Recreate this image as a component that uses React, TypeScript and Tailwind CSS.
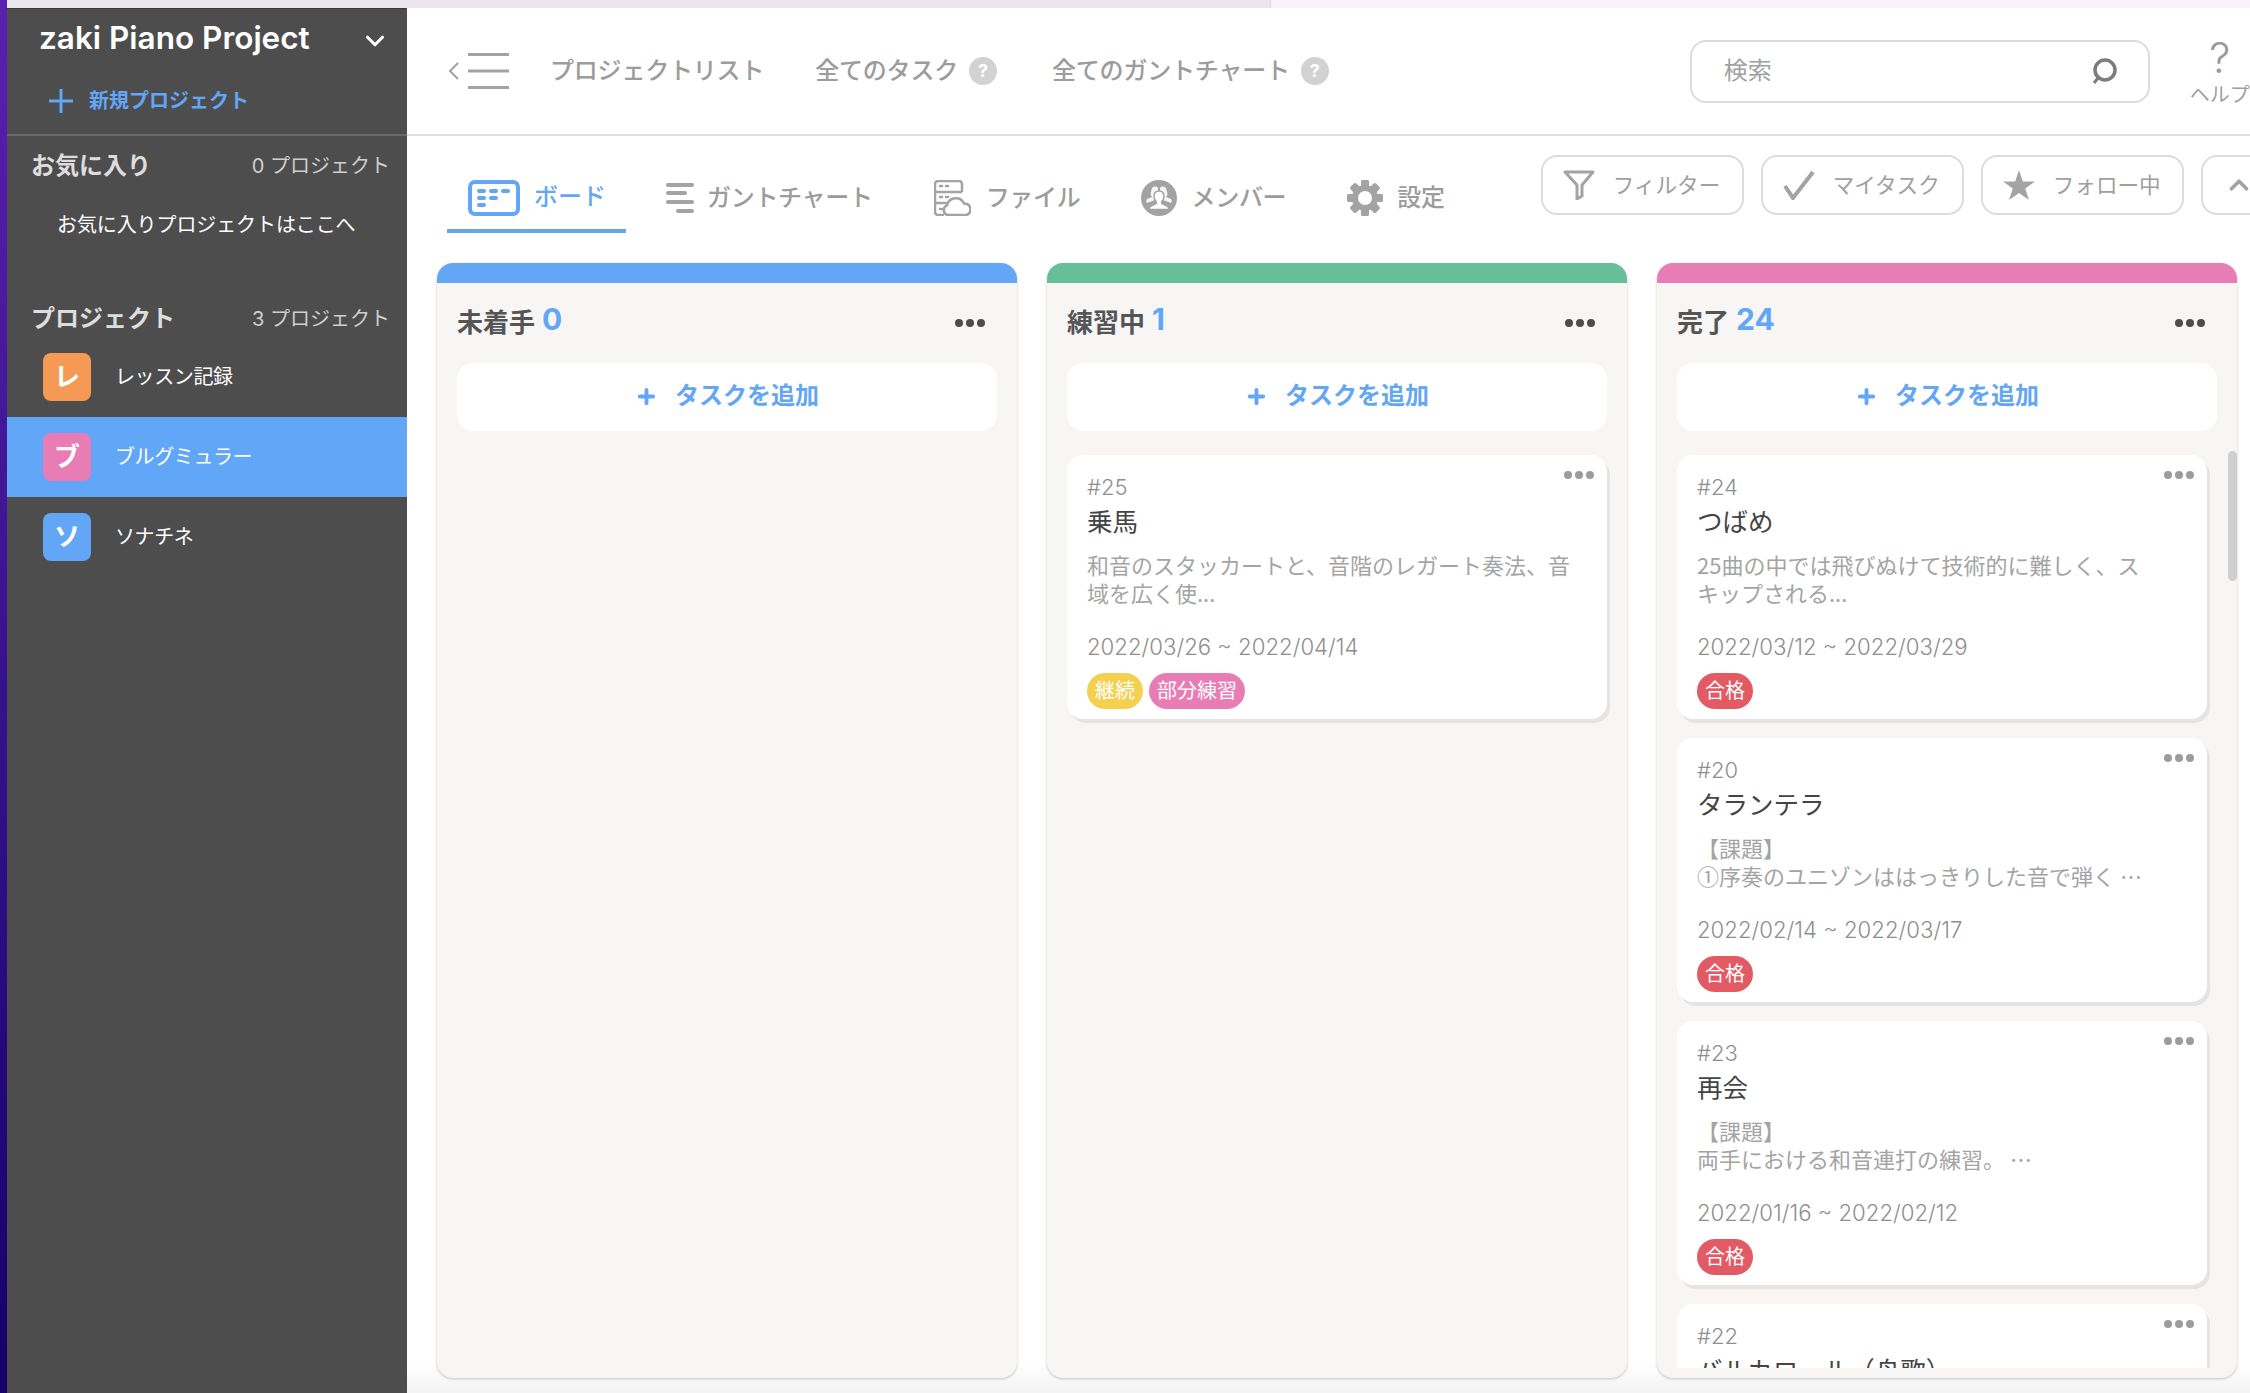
import { ChevronDown, ChevronUp, Plus } from "lucide-react";

const navLinks = [
  { label: "プロジェクトリスト", help: false, className: "ml-[41px]" },
  { label: "全てのタスク", help: true, className: "ml-[51px]" },
  { label: "全てのガントチャート", help: true, className: "ml-[55px]" },
];

function HelpDot() {
  return (
    <span className="ml-[11px] flex h-[28px] w-[28px] items-center justify-center rounded-full bg-[#d2d2d2] text-[18px] font-bold leading-none text-white">
      ?
    </span>
  );
}

function BoardIcon() {
  return (
    <svg viewBox="0 0 52 36" className="h-[36px] w-[52px]">
      <rect x="2" y="2" width="48" height="32" rx="5" fill="none" stroke="#62a6f5" strokeWidth="4" />
      <g fill="#62a6f5">
        <rect x="9" y="9" width="9" height="4" rx="2" />
        <rect x="21" y="9" width="9" height="4" rx="2" />
        <rect x="33" y="9" width="9" height="4" rx="2" />
        <rect x="9" y="16" width="9" height="4" rx="2" />
        <rect x="21" y="16" width="9" height="4" rx="2" />
        <rect x="9" y="23" width="9" height="4" rx="2" />
      </g>
    </svg>
  );
}

function GanttIcon() {
  return (
    <svg viewBox="0 0 28 30" className="h-[30px] w-[28px]" fill="#a3a3a3">
      <rect x="0" y="0" width="28" height="4" rx="2" />
      <rect x="0" y="8" width="21" height="4" rx="2" />
      <rect x="0" y="17" width="28" height="4" rx="2" />
      <rect x="10" y="26" width="18" height="4" rx="2" />
    </svg>
  );
}

function FileIcon() {
  return (
    <svg viewBox="0 0 37 36" className="h-[36px] w-[37px]" fill="none" stroke="#a3a3a3" strokeWidth="2.5">
      <path d="M10 35H4a3 3 0 0 1-3-3V4a3 3 0 0 1 3-3h21a3 3 0 0 1 3 3v8" />
      <path d="M1 12h27M1 23h13" />
      <path d="M14 35a5 5 0 0 1-1-9.6 9 9 0 0 1 17-2 6 6 0 0 1 3 11.4 5 5 0 0 1-2 .2z" />
      <path d="M6 6h2M12 6h2M6 17h2M12 17h2M6 29h2" strokeLinecap="round" />
    </svg>
  );
}

function MemberIcon() {
  return (
    <svg viewBox="0 0 36 36" className="h-[36px] w-[36px]">
      <circle cx="18" cy="18" r="18" fill="#a3a3a3" />
      <g fill="#fff">
        <path d="M11 8c2-2 5-2 6 0v6c0 2-1 3-2 4l-1 2-8 3c-1-1-1-3 0-4l5-2c-1-1-2-3-1-5z" opacity="0.9" />
        <path d="M25 8c-2-2-5-2-6 0v6c0 2 1 3 2 4l1 2 8 3c1-1 1-3 0-4l-5-2c1-1 2-3 1-5z" opacity="0.9" />
      </g>
      <path
        d="M18 11c3 0 5 2 5 5.500 0 2.400-1 4-2.200 5.300v1.700l6.200 3.200c.6 1 .8 2 .8 2.800H8.200c0-.8.2-1.800.8-2.800l6.200-3.200v-1.700C14 20.500 13 18.900 13 16.500c0-3.500 2-5.500 5-5.500z"
        fill="#fff"
        stroke="#a3a3a3"
        strokeWidth="1.500"
      />
    </svg>
  );
}

function GearIcon() {
  return (
    <svg viewBox="0 0 36 36" className="h-[36px] w-[36px]">
      <g fill="#a3a3a3">
        {[0, 45, 90, 135, 180, 225, 270, 315].map((a) => (
          <rect key={a} x="14" y="0" width="8" height="36" rx="2" transform={`rotate(${a} 18 18)`} />
        ))}
        <circle cx="18" cy="18" r="13" />
      </g>
      <circle cx="18" cy="18" r="7" fill="#fff" />
    </svg>
  );
}

const tabs = [
  { label: "ガントチャート", icon: <GanttIcon />, className: "ml-[40px]", gap: "gap-[13px]" },
  { label: "ファイル", icon: <FileIcon />, className: "ml-[61px]", gap: "gap-[15px]" },
  { label: "メンバー", icon: <MemberIcon />, className: "ml-[61px]", gap: "gap-[14px]" },
  { label: "設定", icon: <GearIcon />, className: "ml-[61px]", gap: "gap-[14px]" },
];

function FilterButton({ label, icon }: { label: string; icon: React.ReactNode }) {
  return (
    <div className="flex h-[60px] w-[203px] shrink-0 items-center rounded-[16px] border-2 border-[#dcdcdc] pl-[20px]">
      <span className="flex w-[33px] justify-center">{icon}</span>
      <span className="ml-[17px] text-[21.600px] text-[#a0a0a0]">{label}</span>
    </div>
  );
}

function Dots({ dark }: { dark?: boolean }) {
  const dot = dark ? "bg-[#4d4d4d]" : "bg-[#9c9c9c]";
  return (
    <div className="flex gap-[3px]">
      <span className={`h-[8px] w-[8px] rounded-full ${dot}`} />
      <span className={`h-[8px] w-[8px] rounded-full ${dot}`} />
      <span className={`h-[8px] w-[8px] rounded-full ${dot}`} />
    </div>
  );
}

type Task = {
  id: number;
  title: string;
  lines: string[];
  date: string;
  tags: { label: string; color: string; width: string }[];
};

const pass = { label: "合格", color: "bg-[#e25a64]", width: "w-[56px]" };

const doingTasks: Task[] = [
  {
    id: 25,
    title: "乗馬",
    lines: ["和音のスタッカートと、音階のレガート奏法、音", "域を広く使..."],
    date: "2022/03/26 ~ 2022/04/14",
    tags: [
      { label: "継続", color: "bg-[#f5d04f]", width: "w-[56px]" },
      { label: "部分練習", color: "bg-[#e87cb4]", width: "w-[96px]" },
    ],
  },
];

const doneTasks: Task[] = [
  {
    id: 24,
    title: "つばめ",
    lines: ["25曲の中では飛びぬけて技術的に難しく、ス", "キップされる..."],
    date: "2022/03/12 ~ 2022/03/29",
    tags: [pass],
  },
  {
    id: 20,
    title: "タランテラ",
    lines: ["【課題】", "①序奏のユニゾンははっきりした音で弾く …"],
    date: "2022/02/14 ~ 2022/03/17",
    tags: [pass],
  },
  {
    id: 23,
    title: "再会",
    lines: ["【課題】", "両手における和音連打の練習。 …"],
    date: "2022/01/16 ~ 2022/02/12",
    tags: [pass],
  },
  {
    id: 22,
    title: "バルカロール（舟歌）",
    lines: [],
    date: "",
    tags: [],
  },
];

function TaskCard({ task }: { task: Task }) {
  return (
    <div className="relative h-[264px] shrink-0 rounded-[16px] bg-white pl-[20px] pr-[20px] pt-[20px] shadow-[3px_4px_0_#e4e4e4]">
      <div className="absolute right-[13px] top-[16px]">
        <Dots />
      </div>
      <div className="text-[22px] font-light leading-[24px] text-[#8f8f8f]">#{task.id}</div>
      <div className="mt-[8px] text-[25.500px] leading-[30px] text-[#444]">{task.title}</div>
      <div className="mt-[13px] h-[56px] font-['Noto_Sans_CJK_JP'] text-[22px] leading-[28px] text-[#a4a4a4]">
        {task.lines.map((line) => (
          <div key={line} className="whitespace-nowrap">
            {line}
          </div>
        ))}
      </div>
      <div className="mt-[28px] text-[22.200px] font-light leading-[26px] text-[#8f8f8f]">{task.date}</div>
      <div className="mt-[13px] flex gap-[6px]">
        {task.tags.map((tag) => (
          <span
            key={tag.label}
            className={`flex h-[36px] items-center justify-center rounded-full text-[20px] text-white ${tag.color} ${tag.width}`}
          >
            {tag.label}
          </span>
        ))}
      </div>
    </div>
  );
}

function Column({
  title,
  count,
  bar,
  tasks,
  scroll,
}: {
  title: string;
  count: number;
  bar: string;
  tasks: Task[];
  scroll?: boolean;
}) {
  return (
    <div className="relative flex h-[1115px] w-[580px] flex-col overflow-hidden rounded-[16px] bg-[#f7f6f5] shadow-[0_1px_3px_rgba(0,0,0,0.22)]">
      <div className={`h-[20px] shrink-0 ${bar}`} />
      <div className="flex h-[80px] shrink-0 items-center justify-between pl-[20px] pr-[32px]">
        <div className="relative -top-px flex items-center">
          <span className="text-[26px] font-bold text-[#555]">{title}</span>
          <span className="relative -top-[3px] ml-[7px] text-[30px] font-bold text-[#62a6f5]">{count}</span>
        </div>
        <Dots dark />
      </div>
      <div className="mx-[20px] flex h-[68px] shrink-0 items-center justify-center rounded-[16px] bg-white pb-[2px] text-[24px] font-bold text-[#62a6f5]">
        <Plus size={23} strokeWidth={4} className="mr-[17px]" />
        タスクを追加
      </div>
      <div className={`mt-[24px] flex h-[913px] flex-col gap-[19px] overflow-hidden pl-[20px] ${scroll ? "pr-[30px]" : "pr-[20px]"}`}>
        {tasks.map((task) => (
          <TaskCard key={task.id} task={task} />
        ))}
      </div>
      {scroll && <div className="absolute right-0 top-[188px] h-[130px] w-[9px] rounded-full bg-[#cfcfcf]" />}
    </div>
  );
}

export default function App() {
  return (
    <div
      className="flex h-[1393px] w-[2250px] overflow-hidden bg-white"
      style={{ fontFamily: '"Inter","Noto Sans CJK JP",sans-serif' }}
    >
      <div className="w-[7px] shrink-0 bg-gradient-to-b from-[#5a1fb0] to-[#14006a]" />
      <div className="flex min-w-0 flex-1 flex-col">
        <div className="flex h-[8px] shrink-0">
          <div className="w-[1263px] bg-[#e8e6ec]" />
          <div className="flex-1 border-l border-[#d8d6dc] bg-[#f7f4f9]" />
        </div>
        <div className="flex min-h-0 flex-1">
          {/* sidebar */}
          <aside className="flex w-[400px] shrink-0 flex-col bg-[#4d4d4d] text-white">
            <div className="h-[128px] shrink-0 border-b-2 border-t border-[#696969] border-t-[#3a3a3a]">
              <div className="flex h-[52px] items-center justify-between pl-[32px] pr-[17px] pt-[6px]">
                <span className="text-[31.500px] font-semibold leading-none">zaki Piano Project</span>
                <ChevronDown size={30} strokeWidth={2.500} className="mt-[5px]" />
              </div>
              <div className="mt-[25px] flex items-center pl-[42px] text-[20px] font-bold text-[#62a6f5]">
                <svg viewBox="0 0 24 24" className="h-[24px] w-[24px]" fill="none" stroke="#62a6f5" strokeWidth="3">
                  <path d="M0 12h24M12 0v24" />
                </svg>
                <span className="ml-[16px]">新規プロジェクト</span>
              </div>
            </div>
            <div className="mt-[12px] flex items-center justify-between pl-[24px] pr-[17px]">
              <span className="text-[24px] font-bold text-[#ddd]">お気に入り</span>
              <span className="text-[20px] text-[#cfcfcf]">0 プロジェクト</span>
            </div>
            <div className="mt-[25.500px] pl-[50px] text-[20px] leading-[30px] tracking-[-0.1px]">お気に入りプロジェクトはここへ</div>
            <div className="mt-[61px] flex items-center justify-between pl-[24px] pr-[17px]">
              <span className="text-[24px] font-bold text-[#ddd]">プロジェクト</span>
              <span className="text-[20px] text-[#cfcfcf]">3 プロジェクト</span>
            </div>
            <div className="flex flex-col">
              {[
                { mark: "レ", name: "レッスン記録", color: "bg-[#f49a55]", active: false },
                { mark: "ブ", name: "ブルグミュラー", color: "bg-[#e87cb4]", active: true },
                { mark: "ソ", name: "ソナチネ", color: "bg-[#62a6f5]", active: false },
              ].map((p) => (
                <div key={p.name} className={`flex h-[80px] items-center pl-[36px] ${p.active ? "bg-[#62a6f7]" : ""}`}>
                  <span className={`flex h-[48px] w-[48px] items-center justify-center rounded-[8px] text-[26px] font-bold ${p.color}`}>
                    {p.mark}
                  </span>
                  <span className="ml-[24px] text-[20px] tracking-[-0.4px]">{p.name}</span>
                </div>
              ))}
            </div>
          </aside>

          {/* main */}
          <main className="flex min-w-0 flex-1 flex-col bg-[linear-gradient(to_bottom,#fff_calc(100%-30px),#f3f3f3_100%)]">
            <header className="flex h-[128px] shrink-0 items-center border-b-2 border-[#dedede] text-[#9c9c9c]">
              <svg viewBox="0 0 62 36" className="ml-[40px] h-[36px] w-[62px] shrink-0" fill="none" stroke="#a3a3a3">
                <path d="M11 10 3 18l8 8" strokeWidth="2" />
                <path d="M21 1.500h41M21 18h41M21 34.500h41" strokeWidth="3" />
              </svg>
              {navLinks.map((link) => (
                <div key={link.label} className={`flex shrink-0 items-center whitespace-nowrap ${link.className}`}>
                  <span className="text-[24px] font-medium tracking-[-0.2px]">{link.label}</span>
                  {link.help && <HelpDot />}
                </div>
              ))}
              <div className="ml-[361px] flex h-[63px] w-[460px] shrink-0 items-center justify-between rounded-[16px] border-2 border-[#dcdcdc] pl-[32px] pr-[30px]">
                <span className="text-[24px] text-[#a0a0a0]">検索</span>
                <svg viewBox="0 0 28 28" className="h-[28px] w-[28px]" fill="none" stroke="#7c7c80" strokeWidth="3.500">
                  <ellipse cx="15" cy="13" rx="10" ry="10" />
                  <path d="m8 21-4 5" strokeWidth="3" />
                </svg>
              </div>
              <div className="ml-[38px] flex w-[64px] shrink-0 flex-col items-center">
                <span className="text-[42px] font-light leading-[48px] text-[#999]">?</span>
                <span className="whitespace-nowrap text-[20px] leading-[26px] text-[#a0a0a0]">ヘルプ</span>
              </div>
            </header>

            <div className="flex h-[103px] shrink-0 items-start overflow-hidden">
              <div className="ml-[40px] mt-[44px] flex h-[53px] w-[179px] shrink-0 items-start gap-[14px] border-b-[4px] border-[#66a6ea] pl-[21px] text-[24px] font-medium text-[#62a6f5]">
                <BoardIcon />
                <span className="leading-[34px]">ボード</span>
              </div>
              {tabs.map((t) => (
                <div key={t.label} className={`mt-[44px] flex h-[36px] shrink-0 items-center text-[24px] font-medium text-[#9c9c9c] ${t.gap} ${t.className}`}>
                  {t.icon}
                  <span className="tracking-[-0.3px]">{t.label}</span>
                </div>
              ))}
              <div className="ml-[96px] mt-[19px] flex shrink-0 gap-[17px]">
                <FilterButton
                  label="フィルター"
                  icon={
                    <svg viewBox="0 0 32 30" className="h-[30px] w-[32px]" fill="none" stroke="#a3a3a3" strokeWidth="3">
                      <path d="M2 2h28L19 15v11l-5 3V15z" strokeLinejoin="round" />
                    </svg>
                  }
                />
                <FilterButton
                  label="マイタスク"
                  icon={
                    <svg viewBox="0 0 32 30" className="h-[30px] w-[32px]" fill="none" stroke="#a3a3a3" strokeWidth="4">
                      <path d="m2 16 8 12L30 2" />
                    </svg>
                  }
                />
                <FilterButton
                  label="フォロー中"
                  icon={
                    <svg viewBox="0 0 32 30" className="h-[30px] w-[32px]" fill="#a3a3a3">
                      <path d="m16 0 3.800 11.400H32l-9.800 7.200L26 30l-10-7-10 7 3.800-11.400L0 11.400h12.200z" />
                    </svg>
                  }
                />
                <div className="flex h-[60px] w-[203px] shrink-0 items-center rounded-[16px] border-2 border-[#dcdcdc] pl-[21px]">
                  <ChevronUp size={30} strokeWidth={3} color="#a3a3a3" />
                </div>
              </div>
            </div>

            <div className="ml-[30px] mt-[24px] flex gap-[30px]">
              <Column title="未着手" count={0} bar="bg-[#62a6f5]" tasks={[]} />
              <Column title="練習中" count={1} bar="bg-[#66be9a]" tasks={doingTasks} />
              <Column title="完了" count={24} bar="bg-[#e87cb4]" tasks={doneTasks} scroll />
            </div>
          </main>
        </div>
      </div>
    </div>
  );
}
